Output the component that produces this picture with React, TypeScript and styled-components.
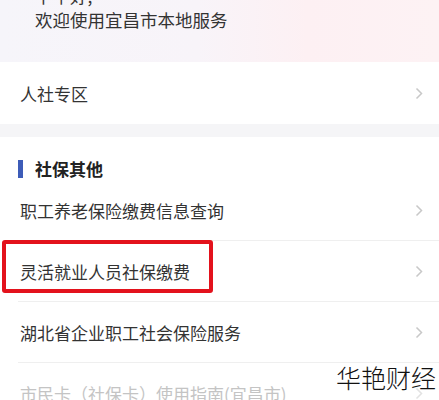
import React from "react";
import styled, { createGlobalStyle } from "styled-components";

const Global = createGlobalStyle`
  html, body { margin: 0; padding: 0; background: #f5f5f7; }
  body { font-family: "Noto Sans CJK SC", "Noto Sans", sans-serif; width: 439px; height: 400px; overflow: hidden; }
  * { box-sizing: border-box; }
`;

const Page = styled.div`
  position: relative;
  width: 439px;
  height: 400px;
  overflow: hidden;
  background: #f5f5f7;
`;

const Hero = styled.div`
  height: 62px;
  padding: 0 0 30px 35px;
  display: flex;
  flex-direction: column;
  justify-content: flex-end;
  overflow: hidden;
  background: linear-gradient(90deg, #f6f5fa 0%, #f8f4f9 45%, #fdf0f3 70%, #fdf2f4 100%);
  color: #333;
  font-size: 17.5px;
  line-height: 24px;
`;

const Greeting = styled.div`
  white-space: nowrap;
`;

const Card = styled.div<{ $gap?: boolean }>`
  background: #fff;
  margin-top: ${(p) => (p.$gap ? "13px" : "0")};
`;

const SingleRow = styled.div`
  height: 62px;
  display: flex;
  align-items: center;
  justify-content: space-between;
  padding: 0 16px 0 20px;
  font-size: 17px;
  color: #333;
`;

const SectionTitle = styled.div`
  display: flex;
  align-items: center;
  gap: 12px;
  padding: 20px 0 0 18px;
  height: 43px;
  font-size: 17px;
  font-weight: 700;
  color: #222;
  line-height: 23px;
`;

const Bar = styled.span`
  width: 5px;
  height: 18px;
  background: #3d5cb8;
  display: block;
`;

const Row = styled.div<{ $faded?: boolean }>`
  position: relative;
  height: 61px;
  margin-left: 18px;
  padding: 0 16px 0 2px;
  display: flex;
  align-items: center;
  justify-content: space-between;
  border-bottom: 1px solid #efefef;
  font-size: 17px;
  color: ${(p) => (p.$faded ? "#c4c4c4" : "#333")};
  white-space: nowrap;
`;

const Highlight = styled.div`
  position: absolute;
  left: -16px;
  top: -1px;
  width: 211px;
  height: 53px;
  border: 4px solid #e3121c;
  border-radius: 3px;
  pointer-events: none;
`;

const Watermark = styled.div`
  position: absolute;
  left: 336px;
  top: 362px;
  font-size: 25px;
  line-height: 30px;
  font-weight: 300;
  color: #111;
  letter-spacing: 0px;
  white-space: nowrap;
`;

const Chevron = ({ faded }: { faded?: boolean }) => (
  <svg width="8" height="13" viewBox="0 0 8 13" style={{ flex: "none" }}>
    <polyline
      points="1.5,1.5 6.5,6.5 1.5,11.5"
      fill="none"
      stroke={faded ? "#e2e2e2" : "#c8c8c8"}
      strokeWidth="1.5"
    />
  </svg>
);

export default function App() {
  return (
    <Page>
      <Global />
      <Hero>
        <Greeting>下午好,</Greeting>
        <Greeting>欢迎使用宜昌市本地服务</Greeting>
      </Hero>
      <Card>
        <SingleRow>
          <span>人社专区</span>
          <Chevron />
        </SingleRow>
      </Card>
      <Card $gap>
        <SectionTitle>
          <Bar />
          <span>社保其他</span>
        </SectionTitle>
        <Row>
          <span>职工养老保险缴费信息查询</span>
          <Chevron />
        </Row>
        <Row>
          <Highlight />
          <span>灵活就业人员社保缴费</span>
          <Chevron />
        </Row>
        <Row>
          <span>湖北省企业职工社会保险服务</span>
          <Chevron />
        </Row>
        <Row $faded>
          <span>市民卡（社保卡）使用指南(宜昌市)</span>
          <Chevron faded />
        </Row>
      </Card>
      <Watermark>华艳财经</Watermark>
    </Page>
  );
}
